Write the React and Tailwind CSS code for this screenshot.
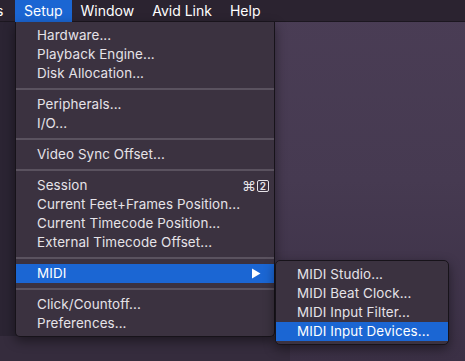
const font = { fontFamily: 'Inter, "Noto Sans", sans-serif' }

const Row = ({ label, shortcut, arrow, active }) => (
  <div
    className={`flex h-[19px] items-center justify-between pl-[21px] pr-[5px] text-[13.4px] tracking-[0.1px] ${
      active ? 'bg-[#1b66d3] text-white' : 'text-[#e6e3e8]'
    }`}
  >
    <span>{label}</span>
    {shortcut && (
      <span className="flex items-center gap-[1px] text-[13px] text-[#e6e3e8]">
        <span className="text-[14px]">⌘</span>
        <span className="flex h-[12px] w-[12px] items-center justify-center rounded-[2px] border border-[#e6e3e8] text-[10px] font-semibold leading-none">
          2
        </span>
      </span>
    )}
    {arrow && (
      <svg width="10" height="11" viewBox="0 0 10 11" className="mr-[8px]">
        <path d="M1 0.5 L9.5 5.5 L1 10.5 Z" fill="#ffffff" />
      </svg>
    )}
  </div>
)

const Sep = () => (
  <div className="flex h-[12px] items-center">
    <div className="h-[2px] w-full bg-[#5a525f]" />
  </div>
)

const App = () => {
  const menus = ['Window', 'Avid Link', 'Help']

  return (
    <div
      className="relative h-[361px] w-[465px] overflow-hidden bg-gradient-to-b from-[#4a3d55] via-[#463a51] to-[#3b3045]"
      style={font}
    >
      <div className="absolute left-0 top-[22px] h-[339px] w-[20px] bg-[#2b2433]" />
      <div className="absolute left-0 top-[336px] h-[25px] w-[290px] bg-[#352c3d]" />

      {/* menu bar */}
      <div className="relative flex h-[22px] items-center border-b border-[#1c1720] bg-[#2b2330] text-[14px] text-white">
        <span className="-ml-[4px] w-[19px]">s</span>
        <span className="flex h-[22px] items-center bg-[#1b66d3] px-[9px]">Setup</span>
        {menus.map((m) => (
          <span key={m} className="px-[9px]">
            {m}
          </span>
        ))}
      </div>

      {/* Setup menu */}
      <div className="absolute left-[15px] top-[22px] w-[260px] rounded-b-[5px] border border-t-0 border-[#17131a] bg-[#3b3240] pb-[3px] pt-[4px] shadow-[0_4px_12px_rgba(0,0,0,0.45)]">
        <Row label="Hardware..." />
        <Row label="Playback Engine..." />
        <Row label="Disk Allocation..." />
        <Sep />
        <Row label="Peripherals..." />
        <Row label="I/O..." />
        <Sep />
        <Row label="Video Sync Offset..." />
        <Sep />
        <Row label="Session" shortcut />
        <Row label="Current Feet+Frames Position..." />
        <Row label="Current Timecode Position..." />
        <Row label="External Timecode Offset..." />
        <Sep />
        <Row label="MIDI" arrow active />
        <Sep />
        <Row label="Click/Countoff..." />
        <Row label="Preferences..." />
      </div>

      {/* MIDI submenu */}
      <div className="absolute left-[275px] top-[260px] w-[174px] rounded-[5px] border border-[#17131a] bg-[#3b3240] pb-[3px] pt-[4px] shadow-[0_4px_12px_rgba(0,0,0,0.45)]">
        <Row label="MIDI Studio..." />
        <Row label="MIDI Beat Clock..." />
        <Row label="MIDI Input Filter..." />
        <Row label="MIDI Input Devices..." active />
      </div>
    </div>
  )
}

export default App
